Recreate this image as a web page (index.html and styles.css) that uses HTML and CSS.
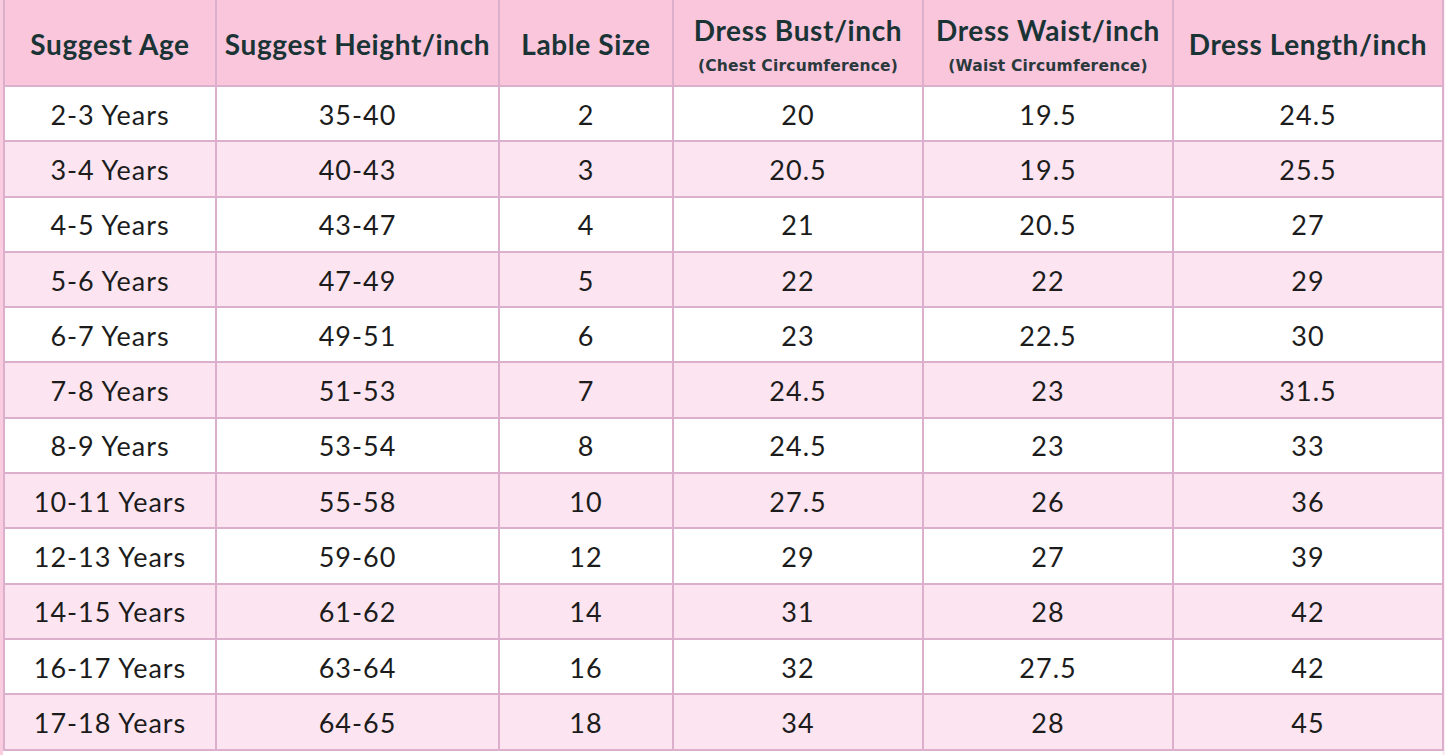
FILE: index.html
```html
<!DOCTYPE html>
<html>
<head>
<meta charset="utf-8">
<link rel="stylesheet" href="styles.css">
</head>
<body>
<div class="wrap">
<table class="chart">
<colgroup>
<col class="c1"><col class="c2"><col class="c3"><col class="c4"><col class="c5"><col class="c6">
</colgroup>
<thead>
<tr>
<th><span class="main">Suggest Age</span></th>
<th><span class="main">Suggest Height/inch</span></th>
<th><span class="main">Lable Size</span></th>
<th class="two"><span class="main">Dress Bust/inch</span><span class="sub">(Chest Circumference)</span></th>
<th class="two"><span class="main">Dress Waist/inch</span><span class="sub">(Waist Circumference)</span></th>
<th><span class="main">Dress Length/inch</span></th>
</tr>
</thead>
<tbody>
<tr><td>2-3 Years</td><td>35-40</td><td>2</td><td>20</td><td>19.5</td><td>24.5</td></tr>
<tr><td>3-4 Years</td><td>40-43</td><td>3</td><td>20.5</td><td>19.5</td><td>25.5</td></tr>
<tr><td>4-5 Years</td><td>43-47</td><td>4</td><td>21</td><td>20.5</td><td>27</td></tr>
<tr><td>5-6 Years</td><td>47-49</td><td>5</td><td>22</td><td>22</td><td>29</td></tr>
<tr><td>6-7 Years</td><td>49-51</td><td>6</td><td>23</td><td>22.5</td><td>30</td></tr>
<tr><td>7-8 Years</td><td>51-53</td><td>7</td><td>24.5</td><td>23</td><td>31.5</td></tr>
<tr><td>8-9 Years</td><td>53-54</td><td>8</td><td>24.5</td><td>23</td><td>33</td></tr>
<tr><td>10-11 Years</td><td>55-58</td><td>10</td><td>27.5</td><td>26</td><td>36</td></tr>
<tr><td>12-13 Years</td><td>59-60</td><td>12</td><td>29</td><td>27</td><td>39</td></tr>
<tr><td>14-15 Years</td><td>61-62</td><td>14</td><td>31</td><td>28</td><td>42</td></tr>
<tr><td>16-17 Years</td><td>63-64</td><td>16</td><td>32</td><td>27.5</td><td>42</td></tr>
<tr><td>17-18 Years</td><td>64-65</td><td>18</td><td>34</td><td>28</td><td>45</td></tr>
</tbody>
</table>
</div>
</body>
</html>
```
FILE: styles.css
```css
html, body {
  margin: 0;
  padding: 0;
  background: #fdeef5;
  font-family: Lato, "Open Sans", sans-serif;
  overflow: hidden;
}
.wrap {
  padding-left: 3px;
  width: 1442px;
  height: 755px;
  box-sizing: border-box;
  background: linear-gradient(to right, #f9cce0 0, #f9cce0 3px, #fff 3px);
}
.chart {
  border-collapse: collapse;
  table-layout: fixed;
  width: 1439px;
}
.c1 { width: 212px; }
.c2 { width: 283px; }
.c3 { width: 174px; }
.c4 { width: 250px; }
.c5 { width: 250px; }
.c6 { width: 270px; }
.chart th, .chart td {
  border: 2px solid #dcb0cc;
  text-align: center;
  padding: 0;
  white-space: nowrap;
}
.chart thead th {
  height: 85px;
  background: #f9c6dc;
  color: #1a3436;
  border-top: none;
  vertical-align: middle;
}
.chart th .main {
  display: block;
  font-weight: 700;
  font-size: 28px;
  letter-spacing: 0.6px;
  line-height: 32px;
  padding-top: 2px;
}
.chart th.two .main {
  padding-top: 0;
  margin-top: -8px;
}
.chart th .sub {
  display: block;
  font-family: "DejaVu Sans", Lato, sans-serif;
  font-weight: 700;
  font-size: 15.5px;
  letter-spacing: 0.2px;
  line-height: 18px;
  color: #2a3a3c;
  margin-top: 11px;
  margin-bottom: -11px;
}
.chart td {
  height: 51.3px;
  line-height: 30px;
  font-size: 27px;
  letter-spacing: 1px;
  color: #1c1c1c;
  background: #fff;
  padding-top: 2px;
}
.chart tbody tr:nth-child(even) td {
  background: #fce5f0;
}
```
